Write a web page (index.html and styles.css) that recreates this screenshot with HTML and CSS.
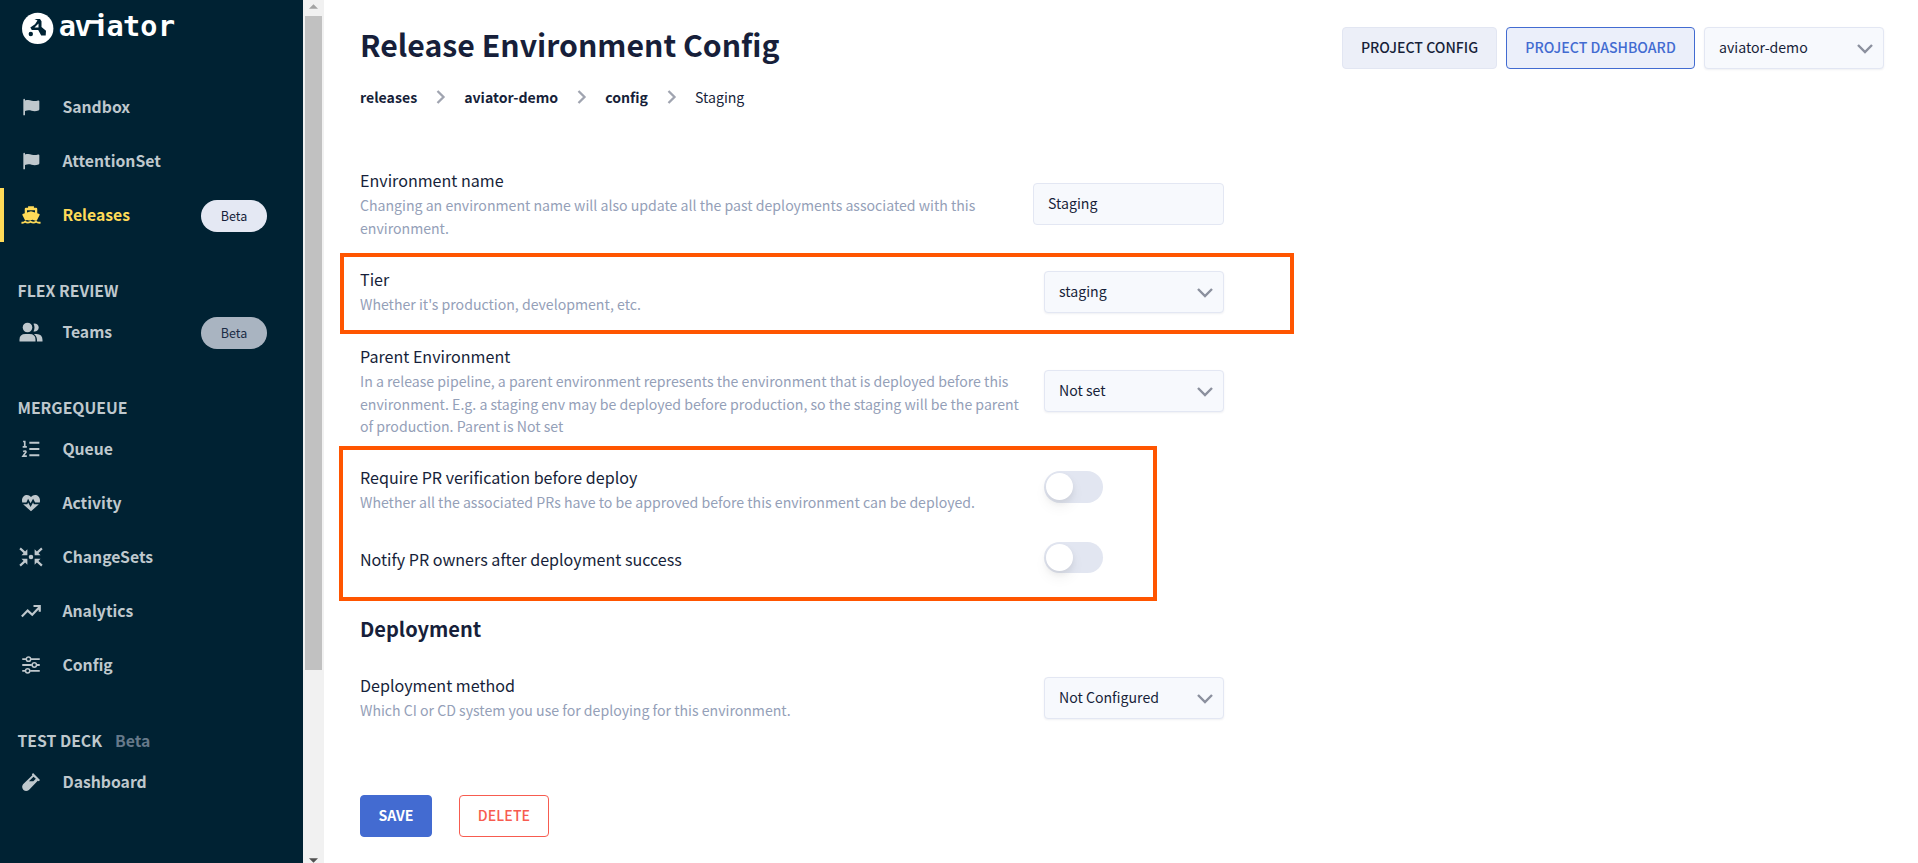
FILE: index.html
```html
<!DOCTYPE html>
<html lang="en">
<head>
<meta charset="utf-8">
<title>Release Environment Config</title>
<link rel="stylesheet" href="styles.css">
</head>
<body>
<div class="app">
  <aside class="sidebar">
    <div class="brand">
      <svg width="160" height="46" viewBox="0 0 160 46">
        <circle cx="15.700" cy="28.400" r="15.700" fill="#fff"/>
        <path d="M12.500 19h5.500l1.500 2.300V27l4.500 3.800-.3 4.700h-4.500l-3-5.500H9.800l-1.500-2.500 4.700-3.200 2.500-3.800z" fill="#002233"/>
        <path d="m12.500 27.500 4-4v4z" fill="#fff"/>
        <circle cx="8.800" cy="34" r="2.200" fill="#002233"/>
        <text class="wordmark" y="36.300"><tspan x="36.700 52.400">av</tspan><tspan class="stem" x="74.500">i</tspan><tspan x="84.600 101 118.300 136">ator</tspan></text>
        <path d="M67 20.200h11v3.600H67z" fill="#fff"/>
      </svg>
    </div>
    <nav class="group">
      <a class="item"><svg class="icon" viewBox="0 0 24 24"><path d="M2.800 3.200a1 1 0 0 1 2 0v1c3-.9 5.500-.7 8.200.2 2.700.8 4.500.7 7.500-.2.900-.3 1.500.200 1.500 1v9.600c0 .7-.4 1.100-1 1.400-3 1.200-5.700 1.200-8.300.4-2.700-.8-4.900-.8-7.900.2V22h-2z"/></svg><span class="text">Sandbox</span></a>
      <a class="item"><svg class="icon" viewBox="0 0 24 24"><path d="M2.800 3.200a1 1 0 0 1 2 0v1c3-.9 5.500-.7 8.200.2 2.700.8 4.500.7 7.500-.2.900-.3 1.500.200 1.500 1v9.600c0 .7-.4 1.100-1 1.400-3 1.200-5.700 1.200-8.300.4-2.700-.8-4.900-.8-7.900.2V22h-2z"/></svg><span class="text">AttentionSet</span></a>
      <a class="item active"><svg class="icon" viewBox="0 0 24 24"><path fill-rule="evenodd" d="M8.500 3.200V1.500h7v1.700h2.500q1.500 0 1.500 1.500V10l2.500.8q.8.500.2 1.400L19 18.500q-2 .7-3.500-.3-1.700-1.200-3.500 0-1.800 1-3.500 0-1.500-.8-3.500.3l-3.200-6.300q-.5-1 .2-1.400L4.500 10V4.700q0-1.500 1.500-1.500zM7.200 6.200V9L12 7.500 16.800 9V6.200z"/><path d="M.500 21.200q2.500.5 4.500-1.200 3 2.200 6.500 0 3.500 2.200 6.500 0 2 1.700 5.500 1.200" fill="none" stroke="currentColor" stroke-width="2.200"/></svg><span class="text">Releases</span><b class="pill">Beta</b></a>
    </nav>
    <h4 class="heading">FLEX REVIEW</h4>
    <nav class="group">
      <a class="item"><svg class="icon wide" viewBox="0 0 24 20"><circle cx="8.500" cy="5.500" r="4.800"/><path d="M14.500 1.800a4 4 0 1 1 0 7.600q2-3.800 0-7.600zM.5 19.500v-2q0-5.500 6-5.500h4q6 0 6 5.500v2zM15 12h2.500q6 0 6 6v1.500H18q.4-5-3-7.500z"/></svg><span class="text">Teams</span><b class="pill dim">Beta</b></a>
    </nav>
    <h4 class="heading">MERGEQUEUE</h4>
    <nav class="group">
      <a class="item"><svg class="icon line" viewBox="0 0 24 24"><path d="M10 4.500h12M10 12h12M10 19.500h12" stroke-width="2.400"/><path d="M2.500 3h2v6M2 9.500h5M2.500 15q3.500-1.500 3.500.7L2.500 20.500H7" stroke-width="2"/></svg><span class="text">Queue</span></a>
      <a class="item"><svg class="icon" viewBox="0 0 24 24"><path d="M12 22 2.600 13.500h5l1-2.200 2.900 5.400 3-5.200.9 2h6zM1.500 11.300C-.5 3 8-.5 12 4.800c4-5.300 12.500-1.800 10.500 6.500H17l-2.500-4.500-3 5.500L8.500 7l-2 4.300z"/></svg><span class="text">Activity</span></a>
      <a class="item"><svg class="icon wide line" viewBox="0 0 26 22"><path d="m1 1.500 6 5.500M25 1.500 19 7M1 20.500l6-5.500M25 20.500 19 15" stroke-width="2.400"/><path d="M9 2.500v6.500H2.500zM17 2.500v6.500h6.500zM9 19.500V13H2.500zM17 19.500V13h6.500z" fill="currentColor" stroke="none"/><circle cx="13" cy="11" r="2.500" fill="currentColor" stroke="none"/></svg><span class="text">ChangeSets</span></a>
      <a class="item"><svg class="icon line" viewBox="0 0 24 24"><path d="m1 18.500 7-7 5.500 5L22 7.500M15 6h7.500v7" stroke-width="2.600"/></svg><span class="text">Analytics</span></a>
      <a class="item"><svg class="icon line" viewBox="0 0 24 24"><path d="M1.500 5H6M12 5h10.500M1.500 12H13M19 12h3.500M1.500 19H5M11 19h11.500" stroke-width="2.200"/><g stroke-width="1.800"><circle cx="9" cy="5" r="2.600"/><circle cx="16" cy="12" r="2.600"/><circle cx="8" cy="19" r="2.600"/></g></svg><span class="text">Config</span></a>
    </nav>
    <h4 class="heading">TEST DECK <span class="soft">Beta</span></h4>
    <nav class="group">
      <a class="item"><svg class="icon" viewBox="0 0 24 24"><path fill-rule="evenodd" d="m14.500 1.200 8.300 8.300-1.500 1.500-1.200-.6L9.500 21.500Q6 24 3 21.500 0 18 2.500 14.700L13.600 4l-.6-1.300zM15 5.800l-5.500 5.400h5.300l3-3z"/></svg><span class="text">Dashboard</span></a>
    </nav>
  </aside>
  <div class="scrollbar">
    <svg class="arrow" viewBox="0 0 10 5"><path d="M0 5 5 0l5 5z" fill="#a3a3a3"/></svg>
    <div class="thumb"></div>
    <svg class="arrow" viewBox="0 0 10 5"><path d="M0 0h10L5 5z" fill="#505050"/></svg>
  </div>
  <main class="main">
    <header class="top">
      <div>
        <h1 class="title">Release Environment Config</h1>
        <div class="crumbs">
          <b>releases</b><svg class="sep" viewBox="0 0 10 14"><path d="m1.500 1 6 6-6 6"/></svg>
          <b>aviator-demo</b><svg class="sep" viewBox="0 0 10 14"><path d="m1.500 1 6 6-6 6"/></svg>
          <b>config</b><svg class="sep" viewBox="0 0 10 14"><path d="m1.500 1 6 6-6 6"/></svg>
          <span>Staging</span>
        </div>
      </div>
      <div class="actions">
        <button class="btn gray">PROJECT CONFIG</button>
        <button class="btn outline">PROJECT DASHBOARD</button>
        <div class="select"><span>aviator-demo</span><svg class="chev" viewBox="0 0 16 10"><path d="m1 1 7 7 7-7"/></svg></div>
      </div>
    </header>
    <section class="form">
      <div class="row name">
        <div><div class="label">Environment name</div><p class="desc">Changing an environment name will also update all the past deployments associated with this<br>environment.</p></div>
        <div class="input"><span>Staging</span></div>
      </div>
      <div class="row tier">
        <div><div class="label">Tier</div><p class="desc">Whether it's production, development, etc.</p></div>
        <div class="select"><span>staging</span><svg class="chev" viewBox="0 0 16 10"><path d="m1 1 7 7 7-7"/></svg></div>
      </div>
      <div class="row parent">
        <div><div class="label">Parent Environment</div><p class="desc">In a release pipeline, a parent environment represents the environment that is deployed before this<br>environment. E.g. a staging env may be deployed before production, so the staging will be the parent<br>of production. Parent is Not set</p></div>
        <div class="select"><span>Not set</span><svg class="chev" viewBox="0 0 16 10"><path d="m1 1 7 7 7-7"/></svg></div>
      </div>
      <div class="row verify">
        <div><div class="label">Require PR verification before deploy</div><p class="desc">Whether all the associated PRs have to be approved before this environment can be deployed.</p></div>
        <div class="toggle"><i class="knob"></i></div>
      </div>
      <div class="row notify">
        <div class="label">Notify PR owners after deployment success</div>
        <div class="toggle"><i class="knob"></i></div>
      </div>
      <h2 class="subtitle">Deployment</h2>
      <div class="row method">
        <div><div class="label">Deployment method</div><p class="desc">Which CI or CD system you use for deploying for this environment.</p></div>
        <div class="select"><span>Not Configured</span><svg class="chev" viewBox="0 0 16 10"><path d="m1 1 7 7 7-7"/></svg></div>
      </div>
      <div class="buttons">
        <button class="btn save">SAVE</button>
        <button class="btn delete">DELETE</button>
      </div>
    </section>
    <div class="callout callout-tier"></div>
    <div class="callout callout-toggles"></div>
  </main>
</div>
</body>
</html>
```

FILE: styles.css
```css
* { box-sizing: border-box; }
body {
  margin: 0;
  height: 863px;
  overflow: hidden;
  background: #fff;
  color: #171f3a;
  font-family: "Noto Sans CJK SC", "Noto Sans", sans-serif;
  font-size: 14.120px;
}
.app { display: flex; height: 863px; }

.sidebar { width: 303px; flex: none; background: #002233; color: #bfc8cd; }
.brand { height: 80px; padding-left: 22px; }
.brand svg { display: block; }
.wordmark { font: bold 28.500px "DejaVu Sans Mono", monospace; fill: #fff; }
.stem { font: bold 30px "Noto Sans", sans-serif; }
.group { display: flex; flex-direction: column; }
.item {
  display: flex;
  align-items: center;
  height: 54px;
  padding: 0 36px 0 17px;
  border-left: 4px solid transparent;
  font-size: 15.750px;
  font-weight: 700;
}
.item.active { color: #ffdb58; border-color: #ffdb58; }
.text { padding-bottom: 2px; }
.icon { width: 20px; height: 20px; margin-right: 21.400px; fill: currentColor; }
.icon.wide { width: 24px; margin: 0 19.400px 0 -2px; }
.icon.line { fill: none; stroke: currentColor; }
.pill {
  margin: 2px 0 0 auto;
  width: 66px;
  height: 32px;
  border-radius: 16px;
  background: #e4e8f3;
  color: #171f3a;
  font-size: 12.500px;
  font-weight: 400;
  line-height: 32px;
  text-align: center;
}
.pill.dim { background: #a9b4c1; color: #1b2c45; }
.heading { margin: 0; padding: 35px 0 0 17.500px; height: 63px; font-size: 15.750px; line-height: 27px; font-weight: 700; }
.soft { margin-left: 9.500px; color: #66798a; }

.scrollbar {
  width: 21px;
  flex: none;
  background: #f1f1f1;
  display: flex;
  flex-direction: column;
  align-items: center;
  padding-top: 4px;
  justify-content: space-between;
}
.arrow { width: 9px; height: 5px; flex: none; }
.thumb { width: 17px; height: 654px; margin: 7px 0 auto; background: #c1c1c1; }

.main { position: relative; flex: 1; padding: 27px 34px 0 36px; }
.top { display: flex; justify-content: space-between; height: 139.500px; }
.title { margin: -5px 0 0; font-size: 30.220px; line-height: 44px; font-weight: 700; }
.crumbs { display: flex; align-items: center; margin-top: 19px; line-height: 24px; }
.sep { width: 10px; height: 14px; margin: 0 18px 0 19px; fill: none; stroke: #a0a4b0; stroke-width: 2.300; }
.actions { display: flex; gap: 9px; align-items: flex-start; }
.btn {
  height: 42px;
  padding: 0 0 1px;
  border: 1px solid #e2e6f2;
  border-radius: 4px;
  font: 500 14.120px/39px "Noto Sans CJK SC", "Noto Sans", sans-serif;
  color: #171f3a;
  white-space: nowrap;
}
.btn.gray { background: #eceff8; width: 155px; }
.btn.outline { background: #ebeffa; border-color: #426bd1; color: #426bd1; width: 189px; }
.select, .input {
  display: flex;
  align-items: center;
  justify-content: space-between;
  width: 180px;
  height: 42px;
  padding: 0 10px 0 14px;
  border: 1px solid #e3e7f3;
  border-radius: 4px;
  background: #f7f9fd;
  box-shadow: 0 1px 2px rgba(50, 60, 100, .08);
}
.select span, .input span { padding-bottom: 2px; }
.input { width: 191px; box-shadow: none; }
.chev { width: 16px; height: 10px; margin-top: 2px; fill: none; stroke: #8b909e; stroke-width: 2.400; }

.form { width: 864px; }
.row { display: flex; justify-content: space-between; align-items: flex-start; white-space: nowrap; }
.label { font-size: 16.080px; line-height: 27px; }
.desc { margin: 0; line-height: 22.500px; color: #94a0b8; }
.name { height: 99px; }
.name .desc { padding-top: .500px; }
.name .input { margin-top: 16.500px; }
.tier { height: 77.500px; }
.tier .select { margin-top: 5.500px; }
.parent { height: 120.500px; }
.parent .select { margin-top: 27px; }
.verify { height: 82px; }
.verify .toggle { margin-top: 7.500px; }
.notify { height: 68.500px; }
.notify .toggle { height: 31px; margin-top: -3.500px; }
.toggle {
  width: 59px;
  height: 32px;
  margin-right: 121px;
  padding: 2px;
  border-radius: 16px;
  background: #e2e6f1;
}
.knob {
  display: block;
  width: 27px;
  height: 27px;
  border-radius: 50%;
  background: #fff;
  box-shadow: 0 7px 14px rgba(0, 0, 0, .06), 0 3px 6px rgba(0, 0, 0, .06);
}
.subtitle { margin: 0; height: 57.500px; font-size: 20.050px; line-height: 30px; font-weight: 700; }
.method { height: 123.500px; }
.method .select { margin-top: 5.500px; }
.buttons { display: flex; gap: 27px; }
.save { width: 72px; background: #436bd1; border-color: #436bd1; color: #fff; font-weight: 700; }
.delete { width: 90px; background: #fff; border-color: #f75c50; color: #f75c50; letter-spacing: .1px; }

.callout { position: absolute; border: 4px solid #ff5500; pointer-events: none; }
.callout-tier { left: 16px; top: 253px; width: 954px; height: 81px; }
.callout-toggles { left: 15px; top: 446px; width: 818px; height: 155px; }
```
